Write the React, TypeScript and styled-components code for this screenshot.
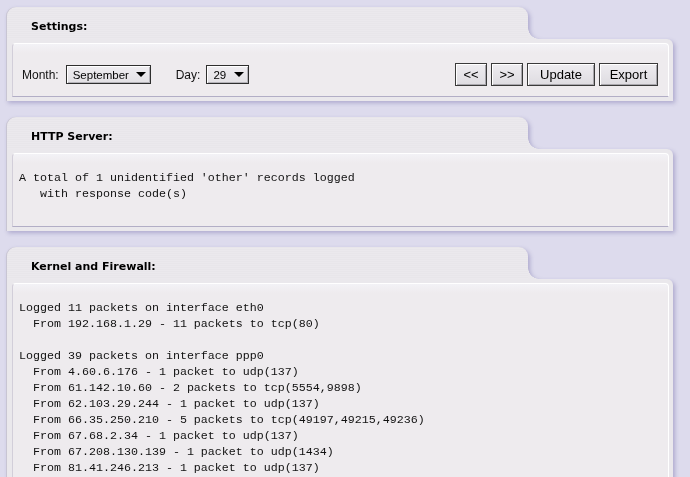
import React from 'react';
import styled, { createGlobalStyle } from 'styled-components';

const GlobalStyle = createGlobalStyle`
  html, body {
    margin: 0;
    padding: 0;
    background: #dddbed;
  }
  body {
    font-family: "Liberation Sans", Arial, sans-serif;
    color: #000;
  }
`;

const Page = styled.div`
  display: flex;
  flex-direction: column;
  gap: 16px;
  padding: 7px 17px 0 7px;
`;

const Card = styled.section`
  filter: drop-shadow(-1px 0 0 #c8c5d3) drop-shadow(2px 2px 2px rgba(118, 110, 168, 0.45));
`;

const Tab = styled.div`
  position: relative;
  box-sizing: border-box;
  width: 521px;
  height: 32px;
  padding: 13px 0 0 24px;
  border-radius: 9px 9px 0 0;
  background: repeating-linear-gradient(#e8e6ea 0 1px, #ebe9ed 1px 2px);
  font: bold 11px/13px "DejaVu Sans", Verdana, sans-serif;
  color: #000;

  &::after {
    content: '';
    position: absolute;
    left: 100%;
    bottom: 0;
    width: 11px;
    height: 11px;
    background: radial-gradient(circle at 100% 0, transparent 10.5px, #eae8ec 11px);
  }
`;

const Body = styled.div`
  background: #eae8ec;
  border-top-right-radius: 6px;
  padding: 4px 4px 4px 5px;
`;

const Panel = styled.div`
  border: 1px solid;
  border-color: #ffffff #ffffff #b2aec6 #d2ced9;
  border-top-right-radius: 4px;
  border-top-left-radius: 4px;
  background: linear-gradient(#f3f2f6, #eeebee 9px);
`;

const Controls = styled.div`
  display: flex;
  align-items: center;
  height: 23px;
  padding: 19px 10px 10px 9px;
`;

const Label = styled.span`
  font-size: 12px;
  color: #111;
  margin-right: ${p => p.$gap}px;
`;

const Select = styled.div`
  box-sizing: border-box;
  display: flex;
  align-items: center;
  width: ${p => p.$w}px;
  height: 19px;
  padding: 0 4px 0 6px;
  margin-right: ${p => p.$after || 0}px;
  border: 1px solid #2e2e2e;
  box-shadow: inset 1px 1px 0 #ffffff, inset -1px -1px 0 #b4b2b8;
  background: linear-gradient(#efedf1, #e2e0e4);
  font-size: 11.5px;
`;

const Arrow = styled.span`
  margin-left: auto;
  width: 0;
  height: 0;
  border-left: 5px solid transparent;
  border-right: 5px solid transparent;
  border-top: 5px solid #000;
`;

const Buttons = styled.div`
  display: flex;
  gap: 4px;
  margin-left: auto;
`;

const Button = styled.button`
  box-sizing: border-box;
  width: ${p => p.$w}px;
  height: 23px;
  padding: 0;
  border: 1px solid #3a3a3a;
  box-shadow: inset 1px 1px 0 #ffffff, inset -1px -1px 0 #a9a7ad;
  background: linear-gradient(#eeecf0, #dedce1);
  font: 13px "Liberation Sans", Arial, sans-serif;
  color: #000;
`;

const Log = styled.pre`
  margin: 0;
  padding: 16px 7px ${p => p.$bottom}px 6px;
  font: 11.67px/16px "Liberation Mono", "Courier New", monospace;
  color: #111;
  white-space: pre;
`;

const httpLog = `A total of 1 unidentified 'other' records logged
   with response code(s)`;

const kernelLog = `Logged 11 packets on interface eth0
  From 192.168.1.29 - 11 packets to tcp(80)

Logged 39 packets on interface ppp0
  From 4.60.6.176 - 1 packet to udp(137)
  From 61.142.10.60 - 2 packets to tcp(5554,9898)
  From 62.103.29.244 - 1 packet to udp(137)
  From 66.35.250.210 - 5 packets to tcp(49197,49215,49236)
  From 67.68.2.34 - 1 packet to udp(137)
  From 67.208.130.139 - 1 packet to udp(1434)
  From 81.41.246.213 - 1 packet to udp(137)`;

export default function App() {
  return (
    <>
      <GlobalStyle />
      <Page>
        <Card>
          <Tab>Settings:</Tab>
          <Body>
            <Panel>
              <Controls>
                <Label $gap={7}>Month:</Label>
                <Select $w={85} $after={25}>
                  September<Arrow />
                </Select>
                <Label $gap={6}>Day:</Label>
                <Select $w={43}>
                  29<Arrow />
                </Select>
                <Buttons>
                  <Button $w={32}>&lt;&lt;</Button>
                  <Button $w={32}>&gt;&gt;</Button>
                  <Button $w={68}>Update</Button>
                  <Button $w={59}>Export</Button>
                </Buttons>
              </Controls>
            </Panel>
          </Body>
        </Card>

        <Card>
          <Tab>HTTP Server:</Tab>
          <Body>
            <Panel>
              <Log $bottom={24}>{httpLog}</Log>
            </Panel>
          </Body>
        </Card>

        <Card>
          <Tab>Kernel and Firewall:</Tab>
          <Body>
            <Panel>
              <Log $bottom={40}>{kernelLog}</Log>
            </Panel>
          </Body>
        </Card>
      </Page>
    </>
  );
}
